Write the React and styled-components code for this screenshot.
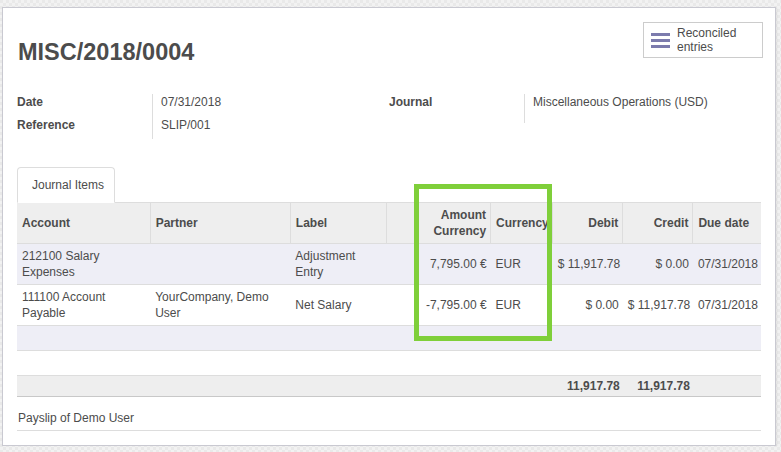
import React from 'react'
import styled, { createGlobalStyle } from 'styled-components'

const GlobalStyle = createGlobalStyle`
  body {
    margin: 0;
    font-family: "Liberation Sans", Arial, sans-serif;
    font-size: 12px;
    color: #4c4c4c;
    background-color: #eeeeee;
    background-image: repeating-conic-gradient(#f2f2f2 0 25%, #e9e9e9 0 50%);
    background-size: 6px 6px;
  }
`

const Sheet = styled.div`
  box-sizing: border-box;
  width: 774px;
  margin: 7px 0 0 2px;
  padding: 14px 14px 14px;
  background: #fff;
  border: 1px solid #c9c9d1;
  box-shadow: 1px 1px 2px rgba(0, 0, 0, 0.08);
`

const TitleRow = styled.div`
  display: flex;
  justify-content: space-between;
  align-items: flex-start;
`

const Title = styled.h1`
  margin: 16px 0 0 1px;
  font-size: 23.5px;
  line-height: 28px;
  font-weight: bold;
  color: #4c4c4c;
`

const SmartButton = styled.div`
  box-sizing: border-box;
  width: 120px;
  height: 36px;
  margin-right: -2px;
  display: flex;
  align-items: center;
  gap: 7px;
  padding-left: 7px;
  border: 1px solid #cccccc;
  line-height: 14px;
  color: #4c4c4c;
`

const BarsIcon = () => (
  <svg width="19" height="15" viewBox="0 0 19 15">
    <rect x="0" y="0" width="19" height="3" fill="#7c7bad" />
    <rect x="0" y="6" width="19" height="3" fill="#7c7bad" />
    <rect x="0" y="12" width="19" height="3" fill="#7c7bad" />
  </svg>
)

const Fields = styled.div`
  display: grid;
  grid-template-columns: 1fr 1fr;
  margin-top: 28px;
`

const Group = styled.div`
  display: grid;
  grid-template-columns: 135px 1fr;
  grid-auto-rows: minmax(22.5px, auto);
  align-content: start;
`

const Label = styled.div`
  font-weight: bold;
  line-height: 16px;
`

const Value = styled.div`
  border-left: 1px solid #dddddd;
  padding-left: 8px;
  line-height: 16px;
  min-height: ${p => (p.tall ? '29px' : '0')};
`

const Notebook = styled.div`
  position: relative;
  margin-top: 28px;
`

const TabBar = styled.div`
  display: flex;
  border-bottom: 1px solid #dddddd;
`

const Tab = styled.div`
  box-sizing: border-box;
  width: 98px;
  height: 36px;
  margin-bottom: -1px;
  padding-left: 14px;
  line-height: 35px;
  white-space: nowrap;
  background: #fff;
  border: 1px solid #dddddd;
  border-bottom-color: #fff;
  border-radius: 4px 4px 0 0;
`

const Table = styled.table`
  width: 100%;
  table-layout: fixed;
  border-collapse: collapse;
  line-height: 16px;
`

const Th = styled.th`
  background: #eeeeee;
  font-weight: bold;
  padding: 3px 4px 4px 5px;
  height: 33px;
  text-align: ${p => (p.num ? 'right' : 'left')};
  vertical-align: middle;
  border-bottom: 1px solid #dddddd;
  border-left: 1px solid #dddddd;
  &:first-child {
    border-left: none;
  }
`

const Row = styled.tr`
  background: ${p => (p.striped ? '#eeeef6' : '#fff')};
  border-bottom: 1px solid #dddddd;
`

const Td = styled.td`
  padding: 4px 4px 4px 5px;
  height: ${p => (p.empty ? '16px' : '32px')};
  text-align: ${p => (p.num ? 'right' : 'left')};
  vertical-align: middle;
  white-space: ${p => (p.num ? 'nowrap' : 'normal')};
`

const FootRow = styled.tr`
  background: #eeeeee;
  border-bottom: 1px solid #c8c8c8;
`

const FootCell = styled.td`
  padding: 2px 3px 2px 5px;
  height: 16px;
  font-weight: bold;
  text-align: right;
`

const Highlight = styled.div`
  position: absolute;
  left: 397px;
  top: 17px;
  width: 138px;
  height: 157px;
  box-sizing: border-box;
  border: 5px solid #7fcf3a;
  pointer-events: none;
`

const Narration = styled.div`
  padding: 13px 0 4px 1px;
  line-height: 16px;
  border-bottom: 1px solid #dddddd;
`

const columns = [133, 140, 96, 104, 62, 70, 70, 68]

const lines = [
  {
    account: '212100 Salary Expenses',
    partner: '',
    label: 'Adjustment Entry',
    amount: '7,795.00 €',
    currency: 'EUR',
    debit: '$ 11,917.78',
    credit: '$ 0.00',
    date: '07/31/2018',
  },
  {
    account: '111100 Account Payable',
    partner: 'YourCompany, Demo User',
    label: 'Net Salary',
    amount: '-7,795.00 €',
    currency: 'EUR',
    debit: '$ 0.00',
    credit: '$ 11,917.78',
    date: '07/31/2018',
  },
]

export default function App() {
  return (
    <React.Fragment>
      <GlobalStyle />
      <Sheet>
        <TitleRow>
          <Title>MISC/2018/0004</Title>
          <SmartButton>
            <BarsIcon />
            <span>
              Reconciled
              <br />
              entries
            </span>
          </SmartButton>
        </TitleRow>

        <Fields>
          <Group>
            <Label>Date</Label>
            <Value>07/31/2018</Value>
            <Label>Reference</Label>
            <Value>SLIP/001</Value>
          </Group>
          <Group>
            <Label>Journal</Label>
            <Value tall>Miscellaneous Operations (USD)</Value>
          </Group>
        </Fields>

        <Notebook>
          <TabBar>
            <Tab>Journal Items</Tab>
          </TabBar>
          <Table>
            <colgroup>
              {columns.map((w, i) => (
                <col key={i} style={{ width: w }} />
              ))}
            </colgroup>
            <thead>
              <tr>
                <Th>Account</Th>
                <Th>Partner</Th>
                <Th>Label</Th>
                <Th num>
                  Amount
                  <br />
                  Currency
                </Th>
                <Th>Currency</Th>
                <Th num>Debit</Th>
                <Th num>Credit</Th>
                <Th>Due date</Th>
              </tr>
            </thead>
            <tbody>
              {lines.map((l, i) => (
                <Row key={i} striped={i % 2 === 0}>
                  <Td>{l.account}</Td>
                  <Td>{l.partner}</Td>
                  <Td>{l.label}</Td>
                  <Td num>{l.amount}</Td>
                  <Td>{l.currency}</Td>
                  <Td num>{l.debit}</Td>
                  <Td num>{l.credit}</Td>
                  <Td>{l.date}</Td>
                </Row>
              ))}
              <Row striped>
                <Td empty colSpan={8} />
              </Row>
              <Row>
                <Td empty colSpan={8} />
              </Row>
            </tbody>
            <tfoot>
              <FootRow>
                <FootCell colSpan={5} />
                <FootCell>11,917.78</FootCell>
                <FootCell>11,917.78</FootCell>
                <FootCell />
              </FootRow>
            </tfoot>
          </Table>
          <Highlight />
        </Notebook>

        <Narration>Payslip of Demo User</Narration>
      </Sheet>
    </React.Fragment>
  )
}
